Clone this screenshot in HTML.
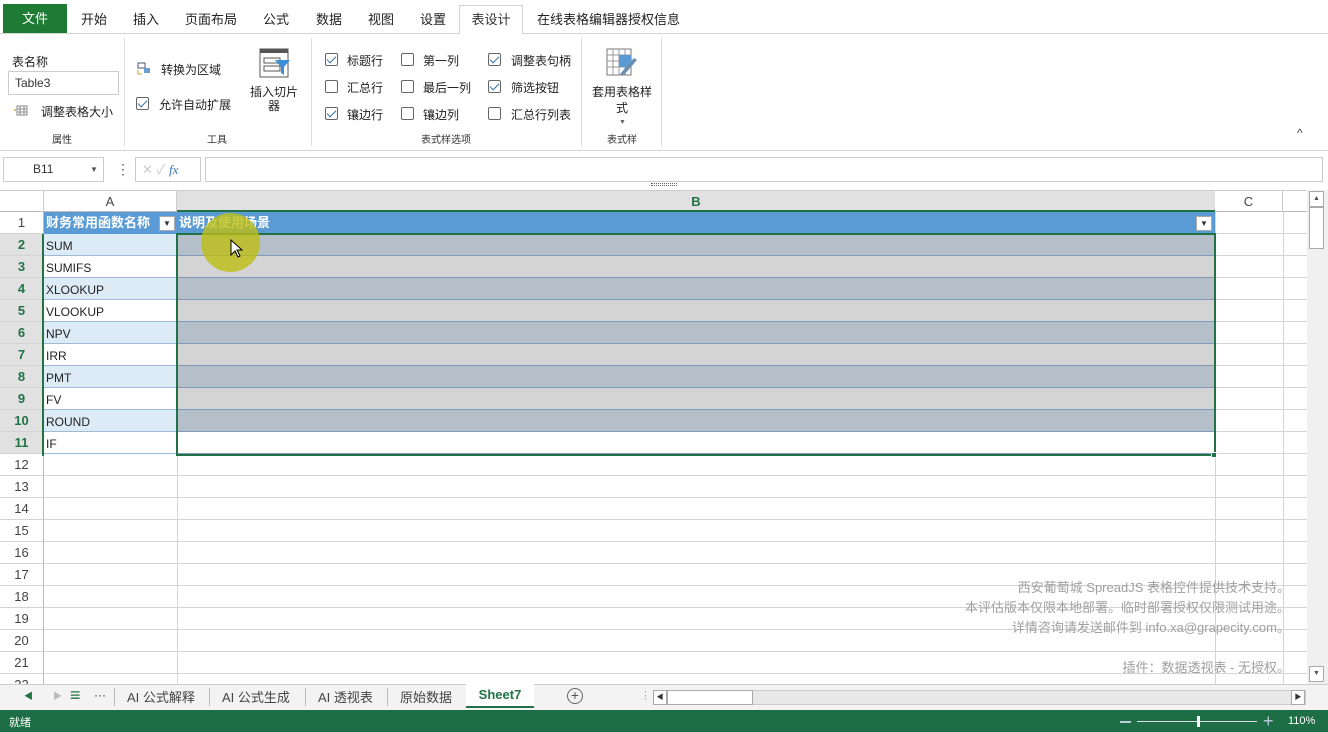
<!DOCTYPE html>
<html><head><meta charset="utf-8"><style>
*{box-sizing:border-box;margin:0;padding:0}
body{width:1328px;height:732px;overflow:hidden;background:#fff;font-family:"Liberation Sans","Noto Sans CJK SC",sans-serif;font-size:12px;color:#333;position:relative}
.a{position:absolute}
.tab{position:absolute;font-size:13px;color:#222}
.cb{position:absolute;width:13px;height:13px;border:1px solid #666;border-radius:2px;background:#fff}
.cb.on::after{content:"";position:absolute;left:3px;top:0px;width:4px;height:8px;border:solid #3a6ea5;border-width:0 1.5px 1.5px 0;transform:rotate(45deg)}
.lbl{position:absolute;font-size:12px;color:#222}
.grp{position:absolute;top:131px;font-size:10px;color:#333}
.sep{position:absolute;top:38px;width:1px;height:108px;background:#ddd}
.rh{position:absolute;left:0;width:44px;height:22px;text-align:center;line-height:22px;font-size:13px;color:#444;border-bottom:1px solid #d4d4d4;border-right:1px solid #bbb;background:#fff}
.rh.s{background:#e1e1e1;color:#217346;font-weight:bold}
.c{position:absolute;height:22px;line-height:24px;padding-left:2px;font-size:12px;color:#222;border-bottom:1px solid #d4d4d4;border-right:1px solid #d4d4d4;white-space:nowrap;overflow:hidden}
.wm{position:absolute;right:38px;font-size:13px;color:#a0a0a0;text-align:right}
</style></head><body>
<!-- tabs -->
<div class="a" style="left:0;top:33px;width:1328px;height:1px;background:#d4d4d4"></div>
<div class="a" style="left:3px;top:4px;width:64px;height:29px;background:#1e7b34;color:#fff;font-size:13px;text-align:center;line-height:29px">文件</div>
<div class="tab" style="left:81px;top:9px">开始</div>
<div class="tab" style="left:133px;top:9px">插入</div>
<div class="tab" style="left:185px;top:9px">页面布局</div>
<div class="tab" style="left:263px;top:9px">公式</div>
<div class="tab" style="left:316px;top:9px">数据</div>
<div class="tab" style="left:368px;top:9px">视图</div>
<div class="tab" style="left:420px;top:9px">设置</div>
<div class="a" style="left:459px;top:5px;width:64px;height:29px;border:1px solid #d4d4d4;border-bottom:none;background:#fff;font-size:13px;text-align:center;line-height:28px">表设计</div>
<div class="tab" style="left:537px;top:9px">在线表格编辑器授权信息</div>
<!-- ribbon -->
<div class="a" style="left:0;top:150px;width:1328px;height:1px;background:#d4d4d4"></div>
<div class="lbl" style="left:12px;top:53px">表名称</div>
<div class="a" style="left:8px;top:71px;width:111px;height:24px;border:1px solid #ccc;padding-left:6px;line-height:22px;font-size:12px">Table3</div>
<svg class="a" style="left:14px;top:104px" width="16" height="14"><rect x="3" y="2" width="10" height="9" fill="none" stroke="#888"/><path d="M3 5h10M3 8h10M6 2v9M10 2v9" stroke="#888"/><circle cx="1" cy="6" r="1" fill="#c9a23a"/></svg>
<div class="lbl" style="left:41px;top:103px">调整表格大小</div>
<div class="grp" style="left:52px">属性</div>
<div class="sep" style="left:124px"></div>
<svg class="a" style="left:136px;top:62px" width="16" height="14"><rect x="2" y="1" width="7" height="5" fill="none" stroke="#456"/><rect x="8" y="6" width="6" height="5" fill="#6a9fd4"/><path d="M2 8v4h4" stroke="#c9a23a" fill="none"/></svg>
<div class="lbl" style="left:161px;top:61px">转换为区域</div>
<div class="cb on" style="left:136px;top:97px"></div>
<div class="lbl" style="left:159px;top:96px">允许自动扩展</div>
<svg class="a" style="left:259px;top:48px" width="32" height="32"><rect x="1" y="1" width="28" height="28" fill="#fff" stroke="#555"/><rect x="1" y="1" width="28" height="4" fill="#555"/><rect x="5" y="10" width="16" height="5" fill="none" stroke="#555"/><rect x="5" y="18" width="16" height="5" fill="none" stroke="#555"/><path d="M16 12h15l-6 7v8l-3-2v-6z" fill="#3a8fd6"/></svg>
<div class="lbl" style="left:250px;top:85px;text-align:center;width:48px;line-height:14px">插入切片器</div>
<div class="grp" style="left:207px">工具</div>
<div class="sep" style="left:311px"></div>
<div class="cb on" style="left:325px;top:53px"></div><div class="lbl" style="left:347px;top:52px">标题行</div>
<div class="cb" style="left:325px;top:80px"></div><div class="lbl" style="left:347px;top:79px">汇总行</div>
<div class="cb on" style="left:325px;top:107px"></div><div class="lbl" style="left:347px;top:106px">镶边行</div>
<div class="cb" style="left:401px;top:53px"></div><div class="lbl" style="left:423px;top:52px">第一列</div>
<div class="cb" style="left:401px;top:80px"></div><div class="lbl" style="left:423px;top:79px">最后一列</div>
<div class="cb" style="left:401px;top:107px"></div><div class="lbl" style="left:423px;top:106px">镶边列</div>
<div class="cb on" style="left:488px;top:53px"></div><div class="lbl" style="left:511px;top:52px">调整表句柄</div>
<div class="cb on" style="left:488px;top:80px"></div><div class="lbl" style="left:511px;top:79px">筛选按钮</div>
<div class="cb" style="left:488px;top:107px"></div><div class="lbl" style="left:511px;top:106px">汇总行列表</div>
<div class="grp" style="left:421px">表式样选项</div>
<div class="sep" style="left:581px"></div>
<svg class="a" style="left:606px;top:48px" width="32" height="32"><rect x="1" y="1" width="24" height="26" fill="#fff" stroke="#777"/><path d="M1 7h24M1 13h24M1 19h24M7 1v26M13 1v26M19 1v26" stroke="#999"/><rect x="13" y="7" width="12" height="12" fill="#5b9bd5"/><path d="M14 26l14-16 3 2-13 15z" fill="#6a8fb0"/></svg>
<div class="lbl" style="left:590px;top:84px;text-align:center;width:64px;line-height:16px">套用表格样式</div>
<div class="a" style="left:619px;top:119px;font-size:7px;color:#666">▼</div>
<div class="grp" style="left:607px">表式样</div>
<div class="sep" style="left:661px"></div>
<div class="a" style="left:1297px;top:126px;font-size:12px;color:#444">^</div>
<!-- formula bar -->
<div class="a" style="left:3px;top:157px;width:101px;height:25px;border:1px solid #ccc;line-height:23px;padding-left:29px;font-size:12px">B11<span style="position:absolute;left:86px;font-size:8px;color:#555">▼</span></div>
<div class="a" style="left:116px;top:160px;font-size:14px;color:#555;line-height:18px">⋮</div>
<div class="a" style="left:135px;top:157px;width:66px;height:25px;border:1px solid #ccc;line-height:23px;padding-left:6px;color:#ccc;font-size:13px">✕ ✓ <i style="color:#3b7bbf;font-family:'Liberation Serif',serif">fx</i></div>
<div class="a" style="left:205px;top:157px;width:1118px;height:25px;border:1px solid #ccc"></div>
<div class="a" style="left:651px;top:183px;width:26px;height:3px;border-top:1px dotted #666;border-bottom:1px dotted #666"></div>
<!-- column headers -->
<div class="a" style="left:0;top:190px;width:1307px;height:22px;background:#fff;border-top:1px solid #ccc;border-bottom:1px solid #bbb"></div>
<div class="a" style="left:0;top:191px;width:44px;height:21px;border-right:1px solid #ccc"></div>
<div class="a" style="left:44px;top:191px;width:133px;height:21px;text-align:center;line-height:21px;font-size:13px;color:#444;border-right:1px solid #ccc">A</div>
<div class="a" style="left:177px;top:191px;width:1038px;height:21px;text-align:center;line-height:21px;font-size:13px;color:#217346;font-weight:bold;background:#e1e1e1;border-bottom:2px solid #217346">B</div>
<div class="a" style="left:1215px;top:191px;width:68px;height:21px;text-align:center;line-height:21px;font-size:13px;color:#444;border-right:1px solid #ccc">C</div>
<!-- grid -->
<div class="a" style="left:44px;top:212px;width:1263px;height:472px;background:repeating-linear-gradient(to bottom,transparent 0,transparent 21px,#d4d4d4 21px,#d4d4d4 22px)"></div>
<div class="a" style="left:177px;top:212px;width:1px;height:472px;background:#d4d4d4"></div>
<div class="a" style="left:1215px;top:212px;width:1px;height:472px;background:#d4d4d4"></div>
<div class="a" style="left:1283px;top:212px;width:1px;height:472px;background:#d4d4d4"></div>
<div class="rh" style="top:212px">1</div>
<div class="rh s" style="top:234px">2</div><div class="rh s" style="top:256px">3</div><div class="rh s" style="top:278px">4</div><div class="rh s" style="top:300px">5</div><div class="rh s" style="top:322px">6</div><div class="rh s" style="top:344px">7</div><div class="rh s" style="top:366px">8</div><div class="rh s" style="top:388px">9</div><div class="rh s" style="top:410px">10</div><div class="rh s" style="top:432px">11</div>
<div class="rh" style="top:454px">12</div><div class="rh" style="top:476px">13</div><div class="rh" style="top:498px">14</div><div class="rh" style="top:520px">15</div><div class="rh" style="top:542px">16</div><div class="rh" style="top:564px">17</div><div class="rh" style="top:586px">18</div><div class="rh" style="top:608px">19</div><div class="rh" style="top:630px">20</div><div class="rh" style="top:652px">21</div><div class="rh" style="top:674px">22</div>
<!-- table -->
<div class="c" style="left:44px;top:212px;width:133px;background:#5b9bd5;color:#fff;font-weight:bold;font-size:13px;border-color:#5b9bd5;line-height:22px">财务常用函数名称</div>
<div class="a" style="left:159px;top:216px;width:16px;height:15px;background:#fff;border:1px solid #aaa;font-size:8px;text-align:center;line-height:13px;color:#333">▼</div>
<div class="c" style="left:177px;top:212px;width:1038px;background:#5b9bd5;color:#fff;font-weight:bold;font-size:13px;border-color:#5b9bd5;line-height:22px">说明及使用场景</div>
<div class="a" style="left:1196px;top:216px;width:16px;height:15px;background:#fff;border:1px solid #aaa;font-size:8px;text-align:center;line-height:13px;color:#333">▼</div>
<div class="c" style="left:44px;top:234px;width:133px;background:#ddebf7;border-color:#9bbbd9">SUM</div><div class="c" style="left:177px;top:234px;width:1038px;background:#b5bfc9;border-color:#7d9bb8"></div>
<div class="c" style="left:44px;top:256px;width:133px;background:#fff;border-color:#9bbbd9">SUMIFS</div><div class="c" style="left:177px;top:256px;width:1038px;background:#d4d4d4;border-color:#7d9bb8"></div>
<div class="c" style="left:44px;top:278px;width:133px;background:#ddebf7;border-color:#9bbbd9">XLOOKUP</div><div class="c" style="left:177px;top:278px;width:1038px;background:#b5bfc9;border-color:#7d9bb8"></div>
<div class="c" style="left:44px;top:300px;width:133px;background:#fff;border-color:#9bbbd9">VLOOKUP</div><div class="c" style="left:177px;top:300px;width:1038px;background:#d4d4d4;border-color:#7d9bb8"></div>
<div class="c" style="left:44px;top:322px;width:133px;background:#ddebf7;border-color:#9bbbd9">NPV</div><div class="c" style="left:177px;top:322px;width:1038px;background:#b5bfc9;border-color:#7d9bb8"></div>
<div class="c" style="left:44px;top:344px;width:133px;background:#fff;border-color:#9bbbd9">IRR</div><div class="c" style="left:177px;top:344px;width:1038px;background:#d4d4d4;border-color:#7d9bb8"></div>
<div class="c" style="left:44px;top:366px;width:133px;background:#ddebf7;border-color:#9bbbd9">PMT</div><div class="c" style="left:177px;top:366px;width:1038px;background:#b5bfc9;border-color:#7d9bb8"></div>
<div class="c" style="left:44px;top:388px;width:133px;background:#fff;border-color:#9bbbd9">FV</div><div class="c" style="left:177px;top:388px;width:1038px;background:#d4d4d4;border-color:#7d9bb8"></div>
<div class="c" style="left:44px;top:410px;width:133px;background:#ddebf7;border-color:#9bbbd9">ROUND</div><div class="c" style="left:177px;top:410px;width:1038px;background:#b5bfc9;border-color:#7d9bb8"></div>
<div class="c" style="left:44px;top:432px;width:133px;background:#fff;border-color:#9bbbd9">IF</div><div class="c" style="left:177px;top:432px;width:1038px;background:#fff;border-color:#7d9bb8"></div>
<!-- selection -->
<div class="a" style="left:176px;top:233px;width:1040px;height:223px;border:2px solid #217346"></div>
<div class="a" style="left:42px;top:234px;width:2px;height:222px;background:#217346"></div>
<div class="a" style="left:1211px;top:452px;width:6px;height:6px;background:#217346;border:1px solid #fff"></div>
<!-- cursor highlight -->
<div class="a" style="left:201px;top:213px;width:59px;height:59px;border-radius:50%;background:rgba(190,190,20,0.8)"></div>
<svg class="a" style="left:230px;top:239px" width="14" height="20"><path d="M1 1v15l4-4 3 6 2-1-3-6h5z" fill="#fff" stroke="#000"/></svg>
<!-- watermark -->
<div class="wm" style="top:577px">西安葡萄城 SpreadJS 表格控件提供技术支持。</div>
<div class="wm" style="top:597px">本评估版本仅限本地部署。临时部署授权仅限测试用途。</div>
<div class="wm" style="top:617px">详情咨询请发送邮件到 info.xa@grapecity.com。</div>
<div class="wm" style="top:657px">插件：数据透视表 - 无授权。</div>
<!-- vertical scrollbar -->
<div class="a" style="left:1307px;top:190px;width:21px;height:494px;background:#f0f0f0"></div>
<div class="a" style="left:1309px;top:191px;width:15px;height:16px;border:1px solid #aaa;background:#fff;font-size:7px;text-align:center;line-height:14px;color:#555">▲</div>
<div class="a" style="left:1309px;top:207px;width:15px;height:42px;border:1px solid #aaa;background:#fff"></div>
<div class="a" style="left:1309px;top:666px;width:15px;height:16px;border:1px solid #aaa;background:#fff;font-size:7px;text-align:center;line-height:14px;color:#555">▼</div>
<!-- sheet tabs -->
<div class="a" style="left:0;top:684px;width:1328px;height:26px;background:#f3f3f3;border-top:1px solid #ccc"></div>
<div class="a" style="left:24px;top:689px;font-size:9px;color:#217346">◀</div>
<div class="a" style="left:53px;top:689px;font-size:9px;color:#bbb">▶</div>
<div class="a" style="left:70px;top:685px;font-size:18px;color:#217346;font-weight:bold">≡</div>
<div class="a" style="left:94px;top:688px;font-size:12px;color:#333">···</div>
<div class="a" style="left:114px;top:688px;width:1px;height:18px;background:#bbb"></div>
<div class="a" style="left:127px;top:687px;font-size:13px;color:#444">AI 公式解释</div>
<div class="a" style="left:209px;top:688px;width:1px;height:18px;background:#bbb"></div>
<div class="a" style="left:222px;top:687px;font-size:13px;color:#444">AI 公式生成</div>
<div class="a" style="left:305px;top:688px;width:1px;height:18px;background:#bbb"></div>
<div class="a" style="left:318px;top:687px;font-size:13px;color:#444">AI 透视表</div>
<div class="a" style="left:387px;top:688px;width:1px;height:18px;background:#bbb"></div>
<div class="a" style="left:400px;top:687px;font-size:13px;color:#444">原始数据</div>
<div class="a" style="left:466px;top:684px;width:68px;height:24px;background:#fff;border-bottom:2px solid #217346;text-align:center;line-height:22px;font-size:13px;color:#217346;font-weight:bold">Sheet7</div>
<div class="a" style="left:567px;top:688px;width:16px;height:16px;border:1.5px solid #666;border-radius:50%;text-align:center;line-height:13px;font-size:14px;color:#555">+</div>
<div class="a" style="left:640px;top:689px;font-size:11px;color:#aaa">⋮</div>
<div class="a" style="left:653px;top:690px;width:653px;height:15px;background:#e8e8e8;border:1px solid #ccc"></div>
<div class="a" style="left:653px;top:690px;width:14px;height:15px;border:1px solid #aaa;background:#fff;font-size:7px;text-align:center;line-height:13px">◀</div>
<div class="a" style="left:667px;top:690px;width:86px;height:15px;border:1px solid #aaa;background:#fff"></div>
<div class="a" style="left:1291px;top:690px;width:14px;height:15px;border:1px solid #aaa;background:#fff;font-size:7px;text-align:center;line-height:13px">▶</div>
<!-- status bar -->
<div class="a" style="left:0;top:710px;width:1328px;height:22px;background:#1e6e45"></div>
<div class="a" style="left:9px;top:714px;font-size:11px;color:#fff">就绪</div>
<div class="a" style="left:1120px;top:721px;width:11px;height:2px;background:#bcd"></div>
<div class="a" style="left:1137px;top:721px;width:120px;height:1px;background:#dde"></div>
<div class="a" style="left:1197px;top:716px;width:3px;height:11px;background:#fff"></div>
<div class="a" style="left:1263px;top:711px;font-size:18px;color:#bcd;line-height:20px">+</div>
<div class="a" style="left:1288px;top:715px;font-size:11px;color:#fff">110%</div>
</body></html>
